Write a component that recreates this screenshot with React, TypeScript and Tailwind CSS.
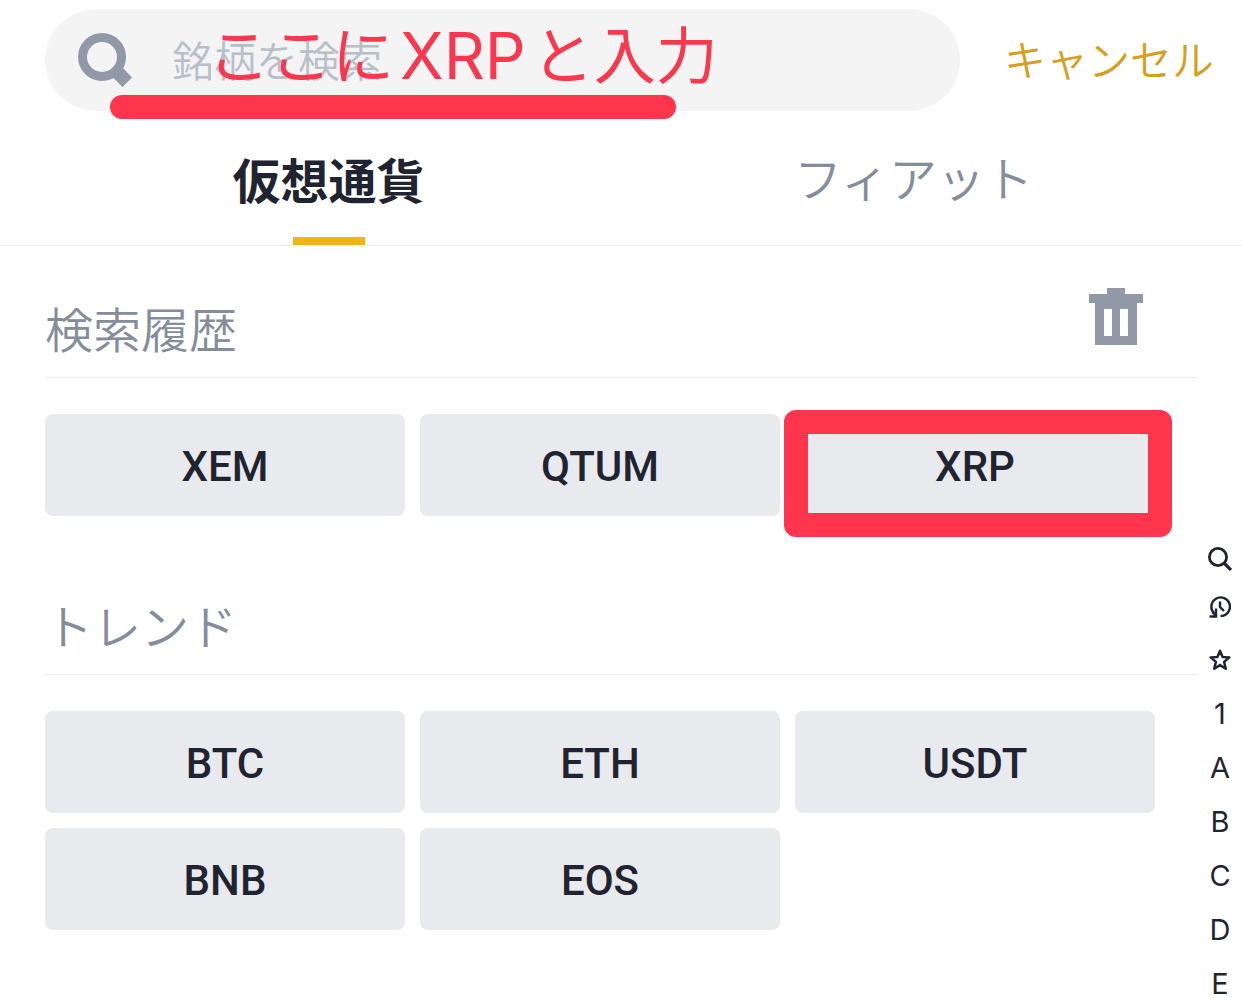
import { useState } from 'react';

const HISTORY = ['XEM', 'QTUM', 'XRP'];
const TRENDING = ['BTC', 'ETH', 'USDT', 'BNB', 'EOS'];
const LETTERS = ['1', 'A', 'B', 'C', 'D', 'E'];

function SearchIcon() {
  return (
    <svg viewBox="0 0 54 54" className="size-[54px] shrink-0" fill="none" aria-hidden="true">
      <circle cx="24" cy="24" r="19.5" stroke="#9199a6" strokeWidth="9" />
      <path d="M44 34 54 44.5 44.5 54 33.5 43Z" fill="#9199a6" />
    </svg>
  );
}

function TrashIcon() {
  return (
    <svg viewBox="0 0 54 57" className="h-[57px] w-[54px]" aria-hidden="true">
      <path
        fill="#9199a6"
        fillRule="evenodd"
        d="M18 0h18v6h18v9h-6v42H6V15H0V6h18zM15 21v27h8V21zM31 21v27h8V21z"
      />
    </svg>
  );
}

function SmallSearchIcon() {
  return (
    <svg viewBox="0 0 24 24" className="size-6" fill="none" stroke="#1f2430" aria-hidden="true">
      <circle cx="10" cy="10" r="8.6" strokeWidth="2.8" />
      <path d="m16 16 7 7" strokeWidth="3.2" />
    </svg>
  );
}

function HistoryIcon() {
  return (
    <svg viewBox="0 0 22 22" className="size-[22px]" fill="none" stroke="#1f2430" aria-hidden="true">
      <path d="M5.2 17.4A9.3 9.3 0 1 1 11.5 20" strokeWidth="2.4" />
      <path d="M0.5 20.5H7V12.5" strokeWidth="2.4" />
      <path d="m3.5 16.5 3.5 3.5" strokeWidth="2" />
      <path d="M11 5.5V11l4 4" strokeWidth="2.4" />
    </svg>
  );
}

function StarIcon() {
  return (
    <svg viewBox="0 0 22 22" className="size-[22px]" fill="none" stroke="#1f2430" aria-hidden="true">
      <path
        d="M11 1.8 13.5 7.9l6.9.5-5.3 4.5 1.7 6.8L11 16.1l-5.8 3.6 1.7-6.8L1.6 8.4l6.9-.5Z"
        strokeWidth="2.5"
        strokeLinejoin="round"
      />
    </svg>
  );
}

function CoinButton({ symbol, marked = false }: { symbol: string; marked?: boolean }) {
  return (
    <div className="relative">
      <button
        type="button"
        className="h-[102px] w-full rounded-lg bg-[#e9eaee] pt-1 text-[42px] leading-none font-medium text-[#1f2430]"
      >
        {symbol}
      </button>
      {marked && (
        <span className="pointer-events-none absolute -top-1 -right-[17px] -bottom-[21px] -left-[11px] rounded-xl border-24 border-[#ff354d]" />
      )}
    </div>
  );
}

function App() {
  const [query, setQuery] = useState('');
  const [tab, setTab] = useState<'crypto' | 'fiat'>('crypto');

  return (
    <div
      lang="ja"
      className="flex min-h-screen flex-col bg-white font-['Roboto','Noto_Sans_CJK_JP',sans-serif]"
    >
      <header className="flex items-center pt-[9px] pr-7 pl-[45px]">
        <div className="relative flex-1">
          <label className="flex h-[102px] items-center gap-10 rounded-full bg-[#f4f4f4] px-[33px]">
            <SearchIcon />
            <input
              type="text"
              aria-label="銘柄を検索"
              placeholder="銘柄を検索"
              value={query}
              onChange={(e) => setQuery(e.target.value)}
              className="h-16 w-full min-w-0 bg-transparent pt-1 text-[42px] font-[350] text-[#1f2430] outline-none placeholder:text-[#b9bfc9]"
            />
          </label>
          <span className="pointer-events-none absolute top-0.5 left-[163px] flex items-baseline gap-1.5 font-['Inter','Noto_Sans_CJK_JP',sans-serif] text-[62px] leading-[90px] whitespace-nowrap text-[#f93850]">
            <span>ここに</span>
            <span className="text-[64px]">XRP</span>
            <span>と入力</span>
          </span>
          <span className="pointer-events-none absolute top-[86px] left-[65px] h-6 w-[566px] rounded-full bg-[#ff354d]" />
        </div>
        <button type="button" className="ml-11 pt-1 text-[42px] leading-none font-[350] text-[#d5a021]">
          キャンセル
        </button>
      </header>

      <nav className="flex border-b border-[#e9eaee] px-9">
        <button
          type="button"
          onClick={() => setTab('crypto')}
          className="flex h-[134px] flex-1 flex-col items-center justify-between pt-[38px] text-5xl leading-[68px] font-bold text-[#1f2430]"
        >
          仮想通貨
          {tab === 'crypto' && <span className="h-2 w-[72px] bg-[#ecb818]" />}
        </button>
        <button
          type="button"
          onClick={() => setTab('fiat')}
          className="flex h-[134px] flex-1 flex-col items-center justify-between pt-9 text-5xl leading-[68px] font-[350] text-[#858d9b]"
        >
          フィアット
          {tab === 'fiat' && <span className="h-2 w-[72px] bg-[#ecb818]" />}
        </button>
      </nav>

      <div className="flex flex-1">
        <main className="flex-1 pl-[45px]">
          <section>
            <div className="flex h-[132px] items-start justify-between border-b border-[#e9eaee] pr-[54px]">
              <h2 className="pt-[52px] text-5xl leading-[68px] font-[350] text-[#858d9b]">検索履歴</h2>
              <button type="button" aria-label="履歴を削除" className="mt-[42px]">
                <TrashIcon />
              </button>
            </div>
            <div className="mt-9 mr-[42px] grid grid-cols-3 gap-[15px]">
              {HISTORY.map((symbol) => (
                <CoinButton key={symbol} symbol={symbol} marked={symbol === 'XRP'} />
              ))}
            </div>
          </section>

          <section className="mt-[27px]">
            <div className="flex h-[132px] items-start border-b border-[#e9eaee]">
              <h2 className="pt-[52px] text-5xl leading-[68px] font-[350] text-[#858d9b]">トレンド</h2>
            </div>
            <div className="mt-9 mr-[42px] grid grid-cols-3 gap-[15px]">
              {TRENDING.map((symbol) => (
                <CoinButton key={symbol} symbol={symbol} />
              ))}
            </div>
          </section>
        </main>

        <aside className="flex w-[45px] flex-col items-center pt-[299px] pl-px font-['Inter',sans-serif] text-[29px] leading-7 text-[#1f2430]">
          <button type="button" aria-label="検索" className="mb-5 flex h-7 items-center">
            <SmallSearchIcon />
          </button>
          <button type="button" aria-label="履歴" className="mb-[25px] flex h-7 items-center">
            <HistoryIcon />
          </button>
          <button type="button" aria-label="お気に入り" className="flex h-7 items-center">
            <StarIcon />
          </button>
          {LETTERS.map((letter) => (
            <button key={letter} type="button" className="mt-[26px] h-7">
              {letter}
            </button>
          ))}
        </aside>
      </div>
    </div>
  );
}

export default App;
